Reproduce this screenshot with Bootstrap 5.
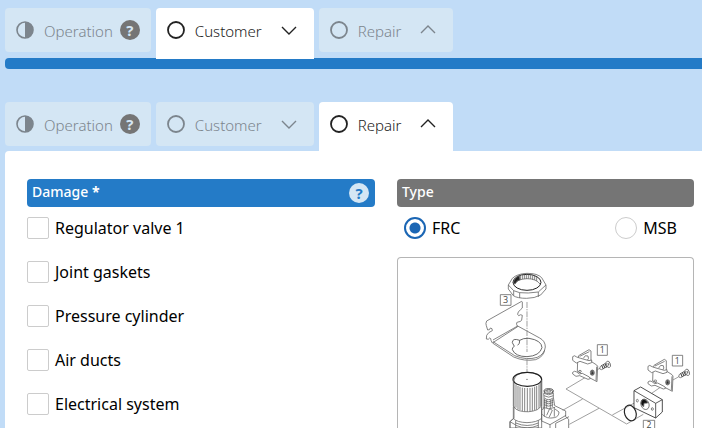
<!DOCTYPE html>
<html lang="en">
<head>
<meta charset="utf-8">
<meta name="viewport" content="width=device-width, initial-scale=1">
<title>Repair</title>
<link href="https://cdn.jsdelivr.net/npm/bootstrap@5.3.0/dist/css/bootstrap.min.css" rel="stylesheet">
<style>
body{background:#c1dcf7;font-family:"Noto Sans","Open Sans",sans-serif;font-size:16px;color:#000}
.steps{gap:5px;padding:8px 0 0 5px}
.steps-open{margin-top:25px}
.step{height:44px;padding:0 11px;gap:10px;border:0;border-radius:4px;background:#d4e6f4;color:#7c858d;font-size:15px;font-weight:300;line-height:20px}
.step.has-chevron{padding-right:17px}
.step-name{padding-top:2px}
.step .chevron{margin-left:9px}
.step .help-dot{margin-left:-3px}
.step.current{background:#fff;color:#222;border-radius:4px 4px 0 0}
.steps-closed .current{height:51px;padding-bottom:7px;margin-bottom:-1px;z-index:1}
.steps-open .current{height:49px;padding-bottom:5px}
.rule{height:11px;margin-left:5px;background:#247bc7;border-radius:4px 0 0 4px}
.help-dot{width:20px;height:20px;border-radius:50%;background:#757575;color:#d4e6f4;font-size:15px;font-weight:700;line-height:20px}
.help-light{background:#d4e6f4;color:#247bc7;border:0;padding:0}
.sheet{margin-left:5px;padding:28px 8px 0 22px;border-radius:4px 0 0 0;background:#fff}
.fields{display:grid;grid-template-columns:348fr 297fr;gap:22px}
.heading{height:28px;margin:0;padding:0 6px 0 5px;border-radius:4px;font-size:14px;font-weight:500;color:#fff;line-height:26px}
.heading-blue{background:#247bc7}
.heading-grey{background:#757575}
.choices{padding-top:10px;gap:22px}
.choice{gap:6px;height:22px;line-height:22px}
.choice .form-check-input{width:22px;height:22px;margin:0;border:1px solid #ccc;flex:none}
.choice .form-check-input[type=checkbox]{border-radius:2px}
.choice .form-check-input[type=radio]:checked{background:radial-gradient(circle,#1b66b4 5px,#fff 6px);border:2px solid #1b66b4}
.types{padding:10px 17px 18px 7px}
.figure-box{border:1px solid #b5b5b5;border-bottom:0;border-radius:4px 4px 0 0}
</style>
<script src="https://cdn.jsdelivr.net/npm/bootstrap@5.3.0/dist/js/bootstrap.bundle.min.js"></script>
</head>
<body>
<svg class="d-none">
  <symbol id="half" viewBox="0 0 18 18"><circle cx="9" cy="9" r="8" fill="none" stroke="currentColor" stroke-width="1.6"/><path d="M9 1a8 8 0 0 1 0 16z" fill="currentColor"/></symbol>
  <symbol id="ring" viewBox="0 0 18 18"><circle cx="9" cy="9" r="8" fill="none" stroke="currentColor" stroke-width="1.8"/></symbol>
  <symbol id="down" viewBox="0 0 16 18"><path d="M1 6l7 7 7-7" fill="none" stroke="currentColor" stroke-width="1.4"/></symbol>
  <symbol id="up" viewBox="0 0 16 18"><path d="M1 12l7-7 7 7" fill="none" stroke="currentColor" stroke-width="1.4"/></symbol>
</svg>
<nav class="steps steps-closed d-flex align-items-start" aria-label="Customer steps">
  <button type="button" class="step d-flex align-items-center"><svg width="18" height="18"><use href="#half"/></svg><span class="step-name">Operation</span><span class="help-dot text-center">?</span></button>
  <button type="button" class="step has-chevron current position-relative d-flex align-items-center"><svg width="18" height="18"><use href="#ring"/></svg><span class="step-name">Customer</span><svg class="chevron" width="16" height="18"><use href="#down"/></svg></button>
  <button type="button" class="step has-chevron d-flex align-items-center"><svg width="18" height="18"><use href="#ring"/></svg><span class="step-name">Repair</span><svg class="chevron" width="16" height="18"><use href="#up"/></svg></button>
</nav>
<div class="rule"></div>
<nav class="steps steps-open d-flex align-items-start" aria-label="Repair steps">
  <button type="button" class="step d-flex align-items-center"><svg width="18" height="18"><use href="#half"/></svg><span class="step-name">Operation</span><span class="help-dot text-center">?</span></button>
  <button type="button" class="step has-chevron d-flex align-items-center"><svg width="18" height="18"><use href="#ring"/></svg><span class="step-name">Customer</span><svg class="chevron" width="16" height="18"><use href="#down"/></svg></button>
  <button type="button" class="step has-chevron current d-flex align-items-center"><svg width="18" height="18"><use href="#ring"/></svg><span class="step-name">Repair</span><svg class="chevron" width="16" height="18"><use href="#up"/></svg></button>
</nav>
<main class="sheet">
  <div class="fields">
    <section>
      <div class="heading heading-blue d-flex justify-content-between"><span>Damage <b>*</b></span><button type="button" class="help-dot help-light align-self-center" aria-label="Help">?</button></div>
      <div class="choices d-flex flex-column">
        <div class="choice d-flex align-items-center"><input class="form-check-input" type="checkbox" id="d1"><label for="d1">Regulator valve 1</label></div>
        <div class="choice d-flex align-items-center"><input class="form-check-input" type="checkbox" id="d2"><label for="d2">Joint gaskets</label></div>
        <div class="choice d-flex align-items-center"><input class="form-check-input" type="checkbox" id="d3"><label for="d3">Pressure cylinder</label></div>
        <div class="choice d-flex align-items-center"><input class="form-check-input" type="checkbox" id="d4"><label for="d4">Air ducts</label></div>
        <div class="choice d-flex align-items-center"><input class="form-check-input" type="checkbox" id="d5"><label for="d5">Electrical system</label></div>
      </div>
    </section>
    <section>
      <div class="heading heading-grey">Type</div>
      <div class="types d-flex justify-content-between">
        <div class="choice d-flex align-items-center"><input class="form-check-input" type="radio" name="type" id="t1" checked><label for="t1">FRC</label></div>
        <div class="choice d-flex align-items-center"><input class="form-check-input" type="radio" name="type" id="t2"><label for="t2">MSB</label></div>
      </div>
      <div class="figure-box">
        <svg class="d-block w-100" viewBox="398 258 295 170" role="img" aria-label="Exploded view" fill="none" stroke="#666" stroke-width="2.4" stroke-linejoin="round" font-family="Open Sans, sans-serif">
          <!-- lock nut and bracket -->
          <g transform="translate(470 260) scale(.3333)">
            <path d="M115 75l12-20q15-14 44-15 32 0 44 13l13 22v12l-16 18q-18 10-42 10-28 0-40-8l-15-20z" fill="#fff"/>
            <path d="M115 75l16 17 18 6 26 1 30-3 23-21M131 92v15M149 98v16M205 96v15" />
            <ellipse cx="171" cy="67" rx="42" ry="24" stroke="#222" stroke-width="3"/>
            <path d="M132 73q10-16 39-17 28 0 40 17M164 44v13M170 43v14M176 43v13M182 44v13M188 45v14M194 47v13M200 50v13M158 45v13M152 47v13"/>
            <path d="M130 69q2-15 18-22l2 12q-11 3-14 12z" fill="#222"/>
            <path d="M155 124L50 183q-4 8-1 14l4 13q7 1 8-6 7 0 6 8-12 4-17 14l-1 11q7 3 10-3 4 0 4 7l4 8L143 200l-3-6q-2-8 4-8 9 0 11-6l2-14q-5-4-11 1-6-3-1-11 8-9 12-12v-18z" fill="#fff"/>
            <path d="M69 240l74-42 66 36q17 9 17 27-2 21-24 31-32 10-68-5L69 245"/>
            <path d="M224 270q-3 20-27 29-34 6-66-8L69 250"/>
            <path d="M149 241q-22-8-22 7l6 11q-7 3-6 10 9 21 44 21 38-2 45-27-1-22-39-28-18-1-28 6zM149 241q1 10-6 15" stroke="#444"/>
            <path d="M171 126V276M171 298V335" stroke="#888" stroke-dasharray="18 3 4 3"/>
            <path d="M91 104h32v32H91z" fill="#fff"/>
            <text x="107" y="130" text-anchor="middle" font-size="27" fill="#444" stroke="none">3</text>
          </g>
          <!-- regulator -->
          <g transform="translate(490 340) scale(.3333)">
            <path d="M60 245l12-10V120q4-22 40-23 37 1 43 22v120l5 25H60z" fill="#fff"/>
            <ellipse cx="112" cy="118" rx="43" ry="21" stroke="#222" stroke-width="3.5"/>
            <path d="M70 120v78q6 11 17 14 29 8 55-3l13-11v-78M78 133v70M84 138v71M90 140v70M97 143v70M104 144v70M112 144v71M120 144v70M127 143v70M134 140v70M140 138v71M147 133v71M151 129v70"/>
            <path d="M70 200v35q10 12 41 13 30-1 44-13v-35M77 241v25M145 241v25M77 249q35 15 68 0M77 256q35 15 68 0M77 263q35 15 68 0M60 245v24M70 235l-10 10 17 10" />
            <circle cx="111" cy="118" r="1"/>
            <path d="M155 210l7-5V171l-1-10q3-12 15-13 13 1 14 12v11l4 26 33 16v17l9 8v35h-81z" fill="#fff"/>
            <ellipse cx="176" cy="153" rx="14" ry="7" stroke="#333"/><ellipse cx="176" cy="153" rx="7" ry="3"/>
            <path d="M162 160q14 9 28 0M162 167q14 9 28 0M164 177v24M170 179v25M181 179v25M187 177v24M163 174q13 10 26 0M162 181q14 9 28 0M162 187q14 9 28 0M162 194q14 9 28 0M160 202q16 9 35 0M163 202v28M193 202v28M170 226l9-20 8 5-9 20M155 211v32l25 11 48-28M180 254v15M197 266v-16l40-20M157 223q13 15 36 10 14-3 14-17l-12-9"/>
          </g>
          <!-- clips, screws, gasket and distributor block -->
          <g transform="translate(560 330) scale(.3333)">
            <path d="M75 143L18 177 200 282 250 253M68 207L8 241M117 235L28 283M157 255L225 218M275 190l26-18M107 122l14-8M337 151l18-10" stroke="#888" stroke-width="2.4"/>
            <g id="clip">
              <path d="M53 91l3-14 31-18 6 4v31l17 11 3 4-2 46-59-31z" fill="#fff"/>
              <path d="M59 79l29-14M110 110l-2 42M70 85q5-12 14-7 4 8-2 13"/>
              <path d="M38 80q5-6 12 1l12 4 25 7 8-2v8l-12 4-23-8-11 5-11-8z" fill="#fff"/>
              <path d="M38 127q6-6 12-1l8 6 9-2 21 11 3 5-7 2-25-11-11 2-10-7z" fill="#fff"/>
              <ellipse cx="97" cy="128" rx="6" ry="8" fill="#888"/><path d="M96 121l-3 13 8-3z" fill="#222"/><ellipse cx="60" cy="124" rx="4" ry="3"/>
            </g>
            <use href="#clip" x="226" y="29"/>
            <g id="screw"><path d="M119 117q0-9 7-11l14-8 5 10-20 11z" fill="#fff"/><path d="M125 106l5 11M130 103l5 11M135 101l5 11" stroke="#333" stroke-width="3"/><ellipse cx="145" cy="103" rx="6" ry="10" transform="rotate(-20 145 103)" fill="#fff"/><path d="M142 101l6 3M147 98l-3 10"/></g>
            <use href="#screw" x="237" y="24"/>
            <path d="M112 44h30v32h-30zM337 76h31v32h-31zM250 271h34v34h-34z" fill="#fff"/>
            <g font-size="26" fill="#444" stroke="none" text-anchor="middle"><text x="127" y="69">1</text><text x="352" y="101">1</text><text x="267" y="293">2</text></g>
            <path d="M222 182l20-11 65 38v37l-20 18-65-31z" fill="#fff" stroke="#222"/>
            <path d="M222 182l65 38 20-11M287 220v44" stroke="#333"/>
            <ellipse cx="255" cy="223" rx="12" ry="16" transform="rotate(-20 255 223)"/><path d="M243 220q0-12 9-12 10 3 11 11l-11 1-1 10q-7-3-8-10z" fill="#111"/>
            <ellipse cx="232" cy="212" rx="3" ry="4"/><ellipse cx="277" cy="237" rx="3" ry="4"/>
            <ellipse cx="211" cy="249" rx="17" ry="24" transform="rotate(-20 211 249)" stroke="#222" stroke-width="3.5"/>
          </g>
        </svg>
      </div>
    </section>
  </div>
</main>
</body>
</html>
